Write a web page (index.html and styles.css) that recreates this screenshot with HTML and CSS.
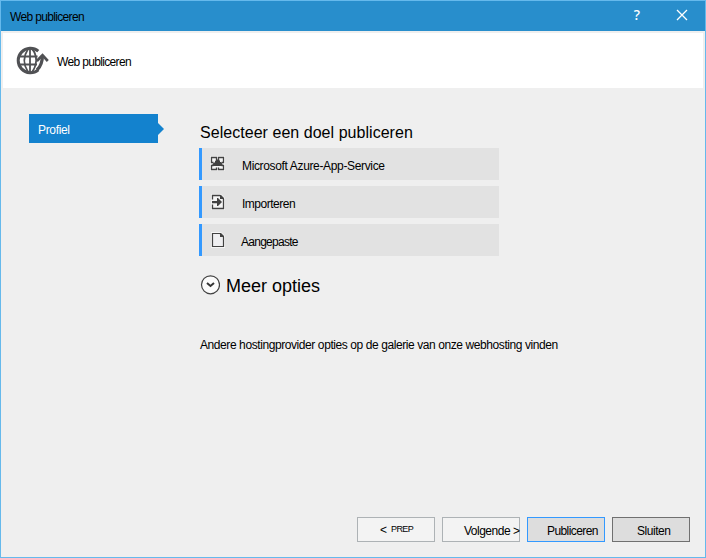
FILE: index.html
```html
<!DOCTYPE html>
<html lang="nl">
<head>
<meta charset="utf-8">
<title>Web publiceren</title>
<link rel="stylesheet" href="styles.css">
</head>
<body>
<div class="window">
  <div class="titlebar">
    <span class="title">Web publiceren</span>
    <span class="help">?</span>
    <svg class="close" width="12" height="12" viewBox="0 0 12 12"><path d="M1 1L11 11M11 1L1 11" stroke="#fff" stroke-width="1.3"/></svg>
  </div>
  <header class="header">
    <svg class="globe" width="34" height="30" viewBox="0 0 34 30" fill="none" stroke="#505154">
      <path d="M22.300 5.200A12.200 12.200 0 1 0 22.300 23.800" stroke-width="3"/>
      <path d="M3 10.500H21.500M3 18.500H21M14 3V26" stroke-width="1.800"/>
      <path d="M12 3Q4.500 14.500 12 26M16 3Q20 7 20.200 14.500Q19.500 22 16 26" stroke-width="1.800"/>
      <path d="M21 24Q26.500 19 26.500 9" stroke-width="3.200"/>
      <path d="M20.800 15L26.500 9.200L31.800 15" stroke-width="2.700"/>
    </svg>
    <span class="heading">Web publiceren</span>
  </header>
  <div class="body">
    <nav class="steps"><div class="step"><span class="step-name">Profiel</span></div></nav>
    <main class="main">
      <h1 class="select-title">Selecteer een doel publiceren</h1>
      <div class="targets">
        <div class="target">
          <svg class="icon" width="15" height="16" viewBox="0 0 15 16"><path fill="#f5f5f5" d="M0 0H15V15H0Z"/><path fill="none" stroke="#424242" stroke-width="1.300" d="M6.500 4V1.500H1.500V6.500H3.500M8.500 4V1.500H13.500V6.500H11.500M3.500 9.500H1.500V13.500H6.500V11.500M11.500 9.500H13.500V13.500H8.500V11.500"/><path fill="#424242" d="M2.500 10V8L4 6.500H5V5L7 3.500H9L10 5V6H11L12.500 8V10Z"/></svg>
          <span class="name azure">Microsoft Azure-App-Service</span>
        </div>
        <div class="target">
          <svg class="icon" width="15" height="16" viewBox="0 0 15 16"><path fill="#f5f5f5" d="M1 0H11L15 4V16H1Z"/><path fill="none" stroke="#424242" stroke-width="1.300" d="M2.500 5.500V1.500H10L13.500 5V14.500H2.500V10.500"/><path fill="#424242" d="M10 1H11L14 4V5H10ZM2 7H7V4H8L12 8L8 12H7V9.300H2Z"/></svg>
          <span class="name import">Importeren</span>
        </div>
        <div class="target">
          <svg class="icon" width="15" height="16" viewBox="0 0 15 16"><path fill="#f5f5f5" d="M1 0H11L15 4V16H1Z"/><path fill="#efeff1" stroke="#424242" stroke-width="1.200" d="M2.500 1.500H10L13.500 5V14.500H2.500Z"/><path fill="#424242" d="M10 1H11L14 4V5H10Z"/></svg>
          <span class="name custom">Aangepaste</span>
        </div>
      </div>
      <div class="more">
        <svg width="20" height="20" viewBox="0 0 20 20" fill="none"><circle cx="10.500" cy="9.800" r="9" fill="#fbfbfb" stroke="#424242" stroke-width="1.200"/><path d="M7 8L10.500 11L14 8" stroke="#333" stroke-width="2"/></svg>
        <span class="more-label">Meer opties</span>
      </div>
      <p class="hosting">Andere hostingprovider opties op de galerie van onze webhosting vinden</p>
    </main>
  </div>
  <footer class="footer">
    <div class="button prev"><span>&lt;</span><span class="prep">PREP</span></div>
    <div class="button next"><span>Volgende &gt;</span></div>
    <div class="button publish"><span>Publiceren</span></div>
    <div class="button shut"><span>Sluiten</span></div>
  </footer>
</div>
</body>
</html>
```

FILE: styles.css
```css
* { box-sizing: border-box; }
body { margin: 0; font: 12px/16px "Liberation Sans", Arial, sans-serif; color: #000; }
span, p, h1 { white-space: nowrap; }
.window { width: 706px; height: 558px; border: 1px solid #65b9ec; background: #efefef; display: flex; flex-direction: column; }
.titlebar { height: 30px; background: #288ecc; display: flex; align-items: center; padding: 2px 17px 0 9px; flex: none; }
.title { flex: 1; letter-spacing: -0.66px; }
.help { color: #fff; font: 500 14px/16px "Noto Sans", sans-serif; margin: -4px 36px 0 0; }
.close { margin-top: -4px; }
.header { height: 55px; margin: 2px 2px 0; background: #fff; display: flex; align-items: center; padding: 3px 0 0 13px; flex: none; }
.globe { margin-top: -3px; }
.heading { margin-left: 7px; letter-spacing: -0.66px; }
.body { flex: 1; display: flex; padding-left: 28px; }
.steps { width: 170px; padding-top: 26px; flex: none; }
.step { position: relative; width: 129px; height: 29px; background: #1382ce; color: #fff; padding: 8px 9px; }
.step::after { content: ""; position: absolute; left: 129px; top: 9px; border: 6px solid transparent; border-left-color: #1382ce; border-right: 0; }
.step-name { letter-spacing: -0.33px; }
.main { padding-top: 35px; }
.select-title { margin: 0 0 5px 1px; font-size: 16px; line-height: 20px; font-weight: 400; letter-spacing: 0.04px; }
.targets { display: flex; flex-direction: column; gap: 6px; }
.target { width: 300px; height: 32px; border-left: 3px solid #3399ff; background: #e2e2e2; display: flex; align-items: center; padding-left: 8px; }
.name { margin: 3px 0 0 17px; }
.custom { margin-left: 16px; letter-spacing: -0.73px; }
.azure { letter-spacing: -0.35px; }
.import { letter-spacing: -0.49px; }
.more { display: flex; align-items: center; height: 24px; margin: 17px 0 0 1px; }
.more-label { font-size: 18px; line-height: 22px; margin: 2px 0 0 6px; }
.hosting { margin: 40px 0 0 1px; letter-spacing: -0.415px; }
.footer { display: flex; gap: 7px; justify-content: flex-end; padding: 0 15px 15px 0; flex: none; }
.button { width: 78px; height: 25px; border: 1px solid #adb2b5; background: #f3f3f3; display: flex; align-items: center; padding-top: 3px; }
.prev { padding: 0 0 0 22px; }
.prep { font-size: 9px; margin: -1px 0 0 4px; letter-spacing: -0.6px; }
.next { padding-left: 21px; letter-spacing: -0.5px; }
.publish { border-color: #3399ff; background: #dddddd; padding-left: 19px; letter-spacing: -0.58px; }
.shut { border-color: #707070; background: #dddddd; padding-left: 24px; letter-spacing: -0.45px; }
```
